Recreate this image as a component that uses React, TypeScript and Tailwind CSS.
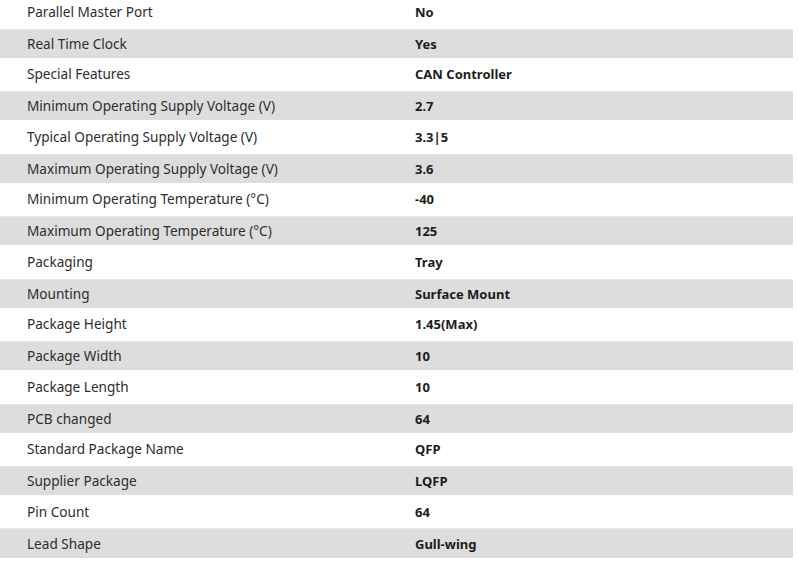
const specs: [string, string][] = [
  ['Parallel Master Port', 'No'],
  ['Real Time Clock', 'Yes'],
  ['Special Features', 'CAN Controller'],
  ['Minimum Operating Supply Voltage (V)', '2.7'],
  ['Typical Operating Supply Voltage (V)', '3.3|5'],
  ['Maximum Operating Supply Voltage (V)', '3.6'],
  ['Minimum Operating Temperature (°C)', '-40'],
  ['Maximum Operating Temperature (°C)', '125'],
  ['Packaging', 'Tray'],
  ['Mounting', 'Surface Mount'],
  ['Package Height', '1.45(Max)'],
  ['Package Width', '10'],
  ['Package Length', '10'],
  ['PCB changed', '64'],
  ['Standard Package Name', 'QFP'],
  ['Supplier Package', 'LQFP'],
  ['Pin Count', '64'],
  ['Lead Shape', 'Gull-wing'],
];

export default function App() {
  return (
    <div className="w-[798px] h-[563px] overflow-hidden bg-white font-['Noto_Sans',sans-serif]">
      <div className="mt-[-3.6px] w-[793px] flex flex-col">
        {specs.map(([label, value], i) => (
          <div key={label} className="h-[31.24px] py-[1.1px]">
            <div
              className={
                'h-full flex items-center ' +
                (i % 2 === 1 ? 'bg-[#dddddd] border-t border-[#e6e6e6]' : 'bg-white')
              }
            >
              <div className="w-[388px] pl-[27px] text-[13.6px] leading-[18px] text-[#2d2d2d]">{label}</div>
              <div className="flex-1 pl-[27px] text-[13px] leading-[18px] font-bold text-[#1c1c1c]">{value}</div>
            </div>
          </div>
        ))}
      </div>
    </div>
  );
}
